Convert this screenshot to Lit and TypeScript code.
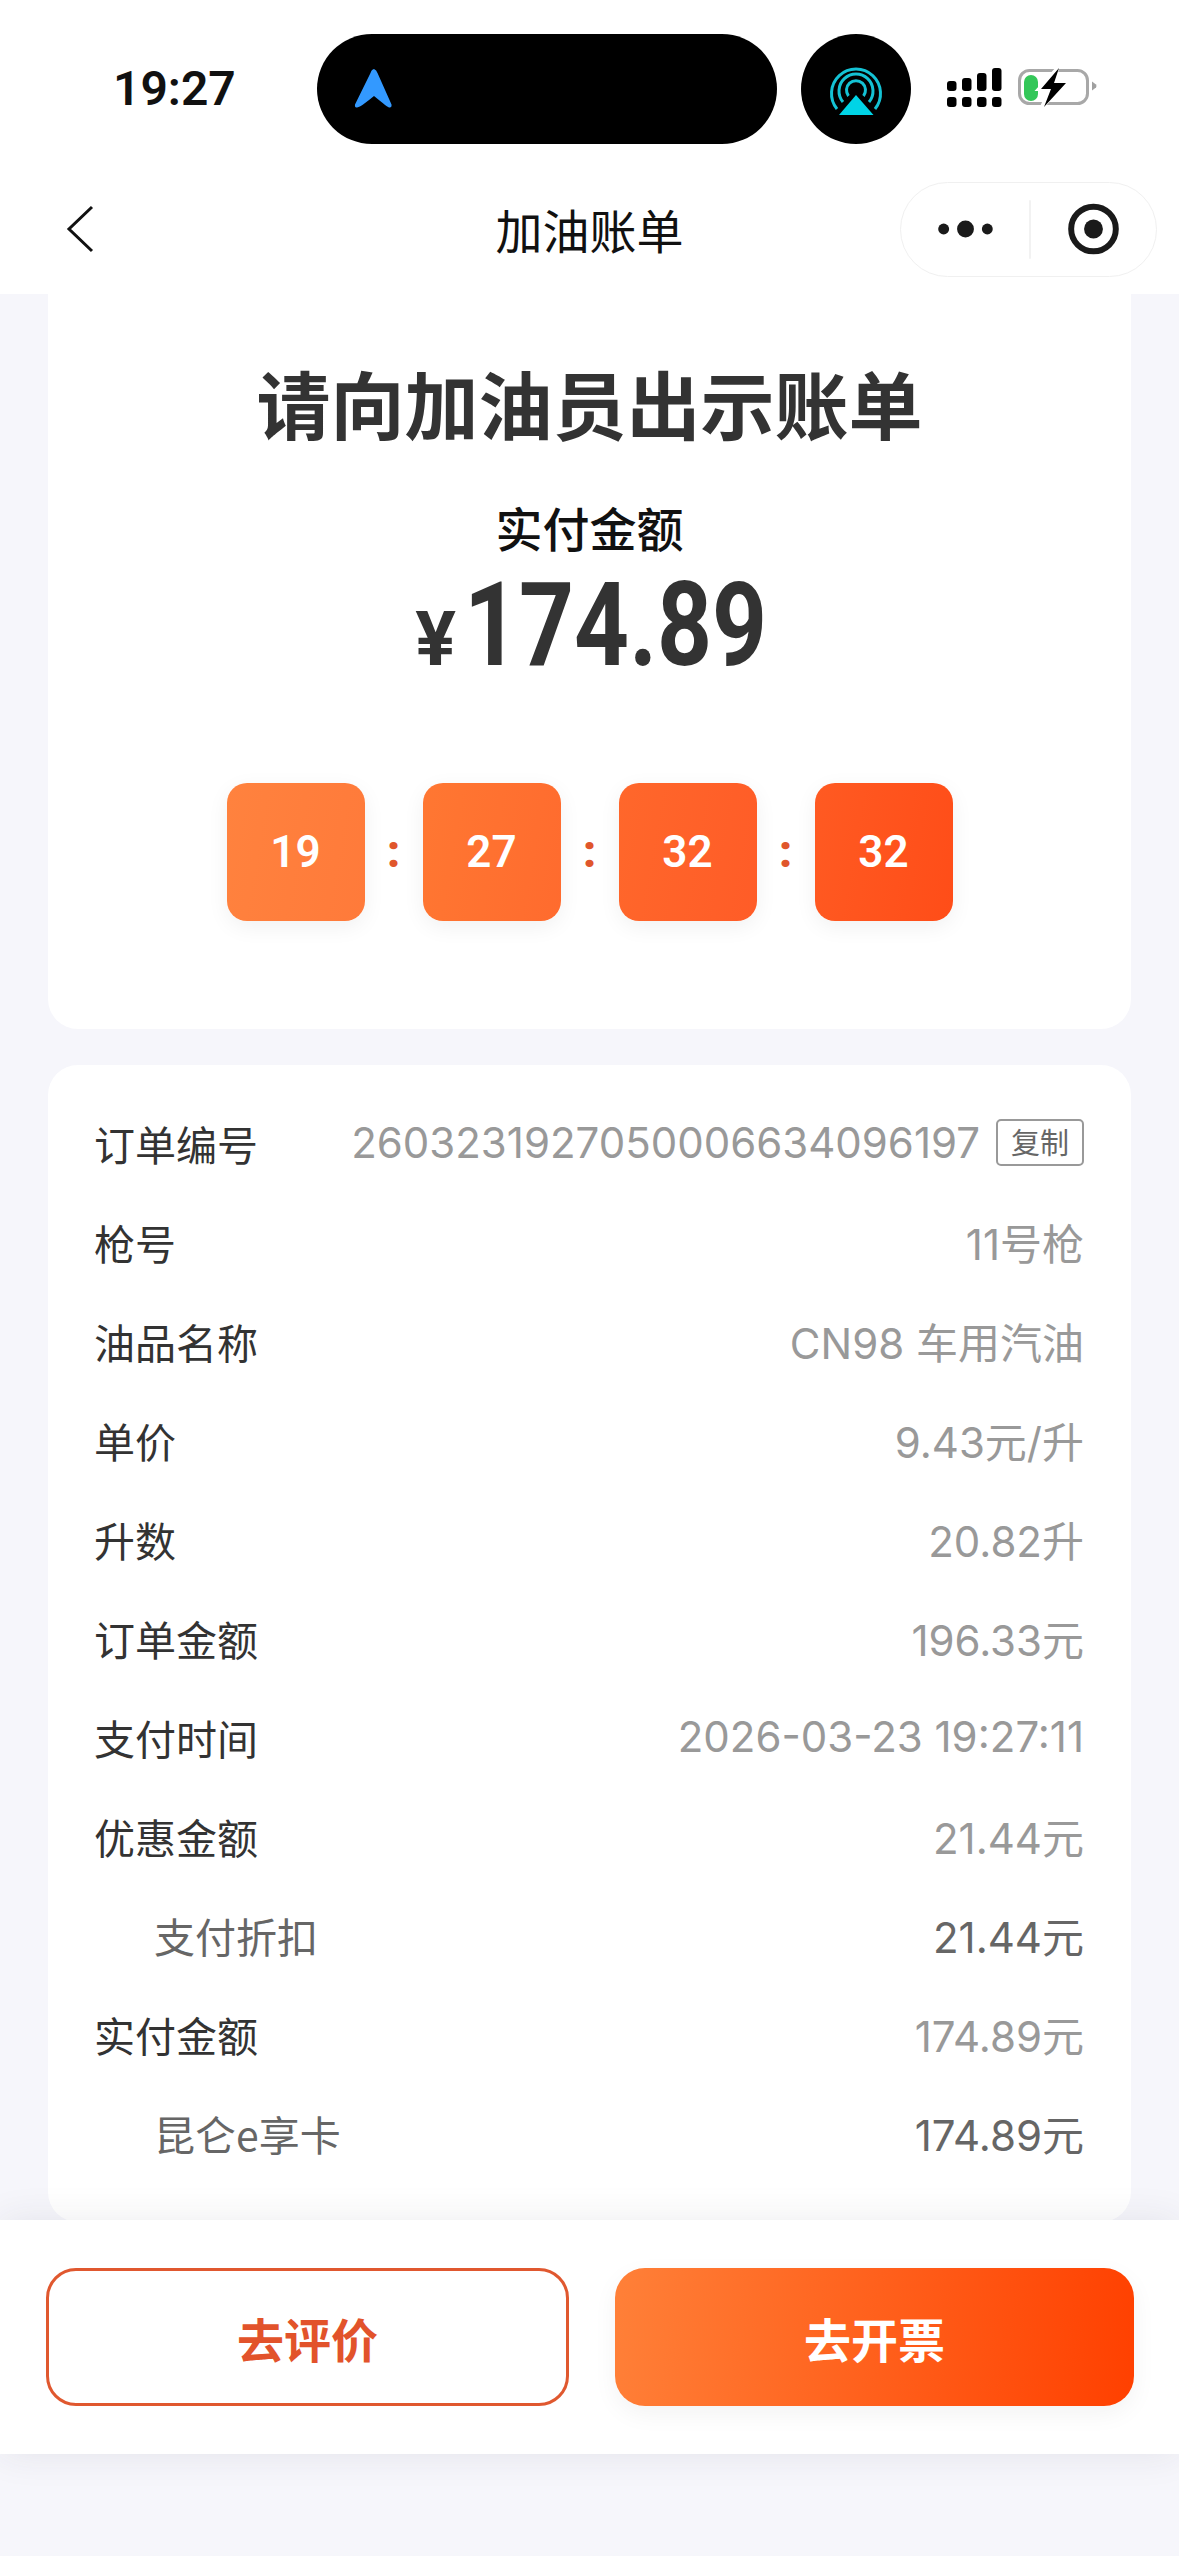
import { LitElement, html, css, svg } from 'lit';
import { customElement } from 'lit/decorators.js';

interface Row {
  label: string;
  value: string;
  sub?: boolean;
  copy?: boolean;
}

const ROWS: Row[] = [
  { label: '订单编号', value: '2603231927050006634096197', copy: true },
  { label: '枪号', value: '11号枪' },
  { label: '油品名称', value: 'CN98 车用汽油' },
  { label: '单价', value: '9.43元/升' },
  { label: '升数', value: '20.82升' },
  { label: '订单金额', value: '196.33元' },
  { label: '支付时间', value: '2026-03-23 19:27:11' },
  { label: '优惠金额', value: '21.44元' },
  { label: '支付折扣', value: '21.44元', sub: true },
  { label: '实付金额', value: '174.89元' },
  { label: '昆仑e享卡', value: '174.89元', sub: true },
];

const TIMER = ['19', '27', '32', '32'];
// one gradient runs across all four boxes
const TIMER_COLORS = [
  ['#ff823e', '#ff7a3a'],
  ['#ff7732', '#ff6b2e'],
  ['#ff672b', '#ff5c27'],
  ['#ff5a22', '#ff4d18'],
];

@customElement('app-root')
export class AppRoot extends LitElement {
  static styles = css`
    :host {
      display: block;
      min-height: 2556px;
      background: #f6f6fb;
      font-family: 'Noto Sans CJK SC', sans-serif;
      color: #333;
    }

    .top {
      background: #fff;
      position: relative;
      z-index: 2;
    }

    .status {
      display: flex;
      align-items: center;
      height: 110px;
      padding: 34px 0 20px 113px;
    }

    .time {
      width: 204px;
      font-family: Roboto, sans-serif;
      font-weight: 600;
      font-size: 48px;
      line-height: 106px;
      color: #111;
    }

    .island {
      width: 460px;
      height: 110px;
      border-radius: 55px;
      background: #000;
    }

    .island svg,
    .bubble svg,
    .signal,
    .battery {
      display: block;
    }

    .bubble {
      width: 110px;
      height: 110px;
      margin-left: 24px;
      border-radius: 50%;
      background: #000;
    }

    .signal {
      margin: 0 0 3px 36px;
    }

    .battery {
      margin: 0 0 2px 16px;
    }

    .nav {
      display: grid;
      grid-template-columns: 1fr auto 1fr;
      align-items: center;
      height: 130px;
    }

    .back {
      display: block;
      margin-left: 66px;
    }

    .nav-title {
      font-size: 47px;
      line-height: 60px;
      color: #111;
    }

    .capsule {
      justify-self: end;
      display: flex;
      align-items: center;
      width: 257px;
      height: 95px;
      margin-right: 22px;
      box-sizing: border-box;
      border: 1.5px solid #f0f0f0;
      border-radius: 48px;
    }

    .capsule svg {
      display: block;
    }

    .main {
      height: 1926px;
      overflow: hidden;
      padding: 0 48px;
    }

    .card {
      background: #fff;
      border-radius: 30px;
    }

    .hero {
      display: flex;
      flex-direction: column;
      align-items: center;
      height: 765px;
      box-sizing: border-box;
      margin-top: -30px;
      padding-top: 82px;
    }

    .hero-title {
      font-size: 74px;
      font-weight: 700;
      line-height: 112px;
      color: #333;
    }

    .paid-label {
      margin-top: 34px;
      font-size: 47px;
      font-weight: 500;
      line-height: 70px;
      color: #111;
    }

    .price {
      display: flex;
      align-items: baseline;
      height: 122px;
      margin-top: 2px;
      color: #333;
      font-family: Roboto, sans-serif;
      font-weight: 700;
      line-height: 122px;
    }

    .price .yen {
      font-size: 76px;
      margin-right: 8px;
    }

    .price .num {
      display: inline-block;
      width: 300px;
      font-size: 117px;
      white-space: nowrap;
      /* no condensed face is installed, so the digits are narrowed here */
      transform: scaleX(0.82);
      transform-origin: left center;
    }

    .timer {
      display: flex;
      align-items: center;
      margin-top: 97px;
    }

    .box {
      width: 138px;
      height: 138px;
      border-radius: 20px;
      display: flex;
      align-items: center;
      justify-content: center;
      color: #fff;
      font-family: Roboto, sans-serif;
      font-weight: 600;
      font-size: 44px;
      box-shadow: 0 6px 22px rgba(0, 0, 0, 0.06);
    }

    .colon {
      width: 58px;
      text-align: center;
      color: #e0562c;
      font-family: Roboto, sans-serif;
      font-weight: 900;
      font-size: 44px;
    }

    .detail {
      margin-top: 36px;
      padding: 28px 47px 40px 46px;
    }

    .row {
      display: flex;
      align-items: center;
      justify-content: space-between;
      height: 99px;
    }

    .label {
      color: #333;
      font-size: 41px;
    }

    .value {
      display: flex;
      align-items: center;
      color: #999;
      font-family: Inter, 'Noto Sans CJK SC', sans-serif;
      font-size: 42px;
    }

    .row.sub .label {
      margin-left: 60px;
      color: #666;
    }

    .row.sub .value {
      color: #666;
    }

    .copy {
      margin-left: 16px;
      width: 88px;
      height: 47px;
      box-sizing: border-box;
      border: 2.5px solid #999;
      border-radius: 5px;
      font-family: 'Noto Sans CJK SC', sans-serif;
      font-size: 29px;
      line-height: 40px;
      text-align: center;
      color: #666;
    }

    .footer {
      position: relative;
      display: grid;
      grid-template-columns: 523px 519px;
      gap: 46px;
      height: 234px;
      box-sizing: border-box;
      padding: 48px 0 0 46px;
      background: #fff;
      box-shadow: 0 0 36px rgba(40, 40, 70, 0.09);
    }

    .btn {
      height: 138px;
      box-sizing: border-box;
      border-radius: 30px;
      display: flex;
      align-items: center;
      justify-content: center;
      font-size: 47px;
      font-weight: 700;
    }

    .btn.ghost {
      border: 3px solid #e0582f;
      color: #e2532b;
      background: #fff;
    }

    .btn.solid {
      color: #fff;
      background: linear-gradient(96deg, #ff8038, #ff4000);
      box-shadow: 0 8px 24px rgba(0, 0, 0, 0.05);
    }
  `;

  private renderSignal() {
    const xs = [0, 15, 30, 45];
    const tops = [13, 10, 5, 0];
    return html`<svg class="signal" width="55" height="39" viewBox="0 0 55 39">
      ${xs.map(
        (x, i) => svg`
          <rect x=${x} y=${tops[i]} width="9.5" height=${23 - tops[i]} rx="3" fill="#000"></rect>
          <rect x=${x} y="29" width="9.5" height="10" rx="3" fill="#000"></rect>`
      )}
    </svg>`;
  }

  private renderBattery() {
    return html`<svg class="battery" width="80" height="40" viewBox="0 0 80 40">
      <rect x="1.5" y="2.5" width="68" height="33" rx="10" fill="none" stroke="#a8a8a8" stroke-width="3"></rect>
      <path d="M74 13.5 L78 16.5 Q79 18 78 19.5 L74 22.5 Z" fill="#a0a0a0"></path>
      <rect x="6" y="7" width="14" height="26" rx="7" fill="#34c759"></rect>
      <path d="M39 1 L21 21 L32 21 L24 39 L47 15 L35 15 Z" fill="#fff" stroke="#fff" stroke-width="4"></path>
      <path d="M41 0 L23 21 L33 21 L26 39 L48 15 L36 15 Z" fill="#000"></path>
    </svg>`;
  }

  render() {
    return html`
      <div class="top">
        <div class="status">
          <div class="time">19:27</div>
          <div class="island">
            <svg width="110" height="110" viewBox="0 0 110 110">
              <path
                d="M57 35 Q59.500 36 60.500 39 L74.500 70.500 Q75 74 72 73.500 Q71 73.500 57 62 Q43 73.500 40 73.500 Q37.500 74 38 70.500 L53.500 39 Q54.500 35.500 57 35 Z"
                fill="#3399ff"
              ></path>
            </svg>
          </div>
          <div class="bubble">
            <svg width="110" height="110" viewBox="0 0 110 110">
              <g fill="none" stroke="#14c2d4" stroke-width="3">
                <path d="M36 75 A24.500 24.500 0 1 1 74 75"></path>
                <path d="M42 68 A17 17 0 1 1 68 68"></path>
                <path d="M47.500 62 A9.500 9.500 0 1 1 62.500 62"></path>
              </g>
              <path d="M55 61 L72.500 81 L38 81 Z" fill="#00d4e6"></path>
            </svg>
          </div>
          ${this.renderSignal()} ${this.renderBattery()}
        </div>
        <div class="nav">
          <svg class="back" width="30" height="50" viewBox="0 0 30 50">
            <path d="M26 3 L3 25 L26 47" fill="none" stroke="#111" stroke-width="3"></path>
          </svg>
          <div class="nav-title">加油账单</div>
          <div class="capsule">
            <svg width="257" height="95" viewBox="0 0 257 95">
              <circle cx="43" cy="47" r="5.500" fill="#1a1a1a"></circle>
              <circle cx="65" cy="47" r="8.500" fill="#1a1a1a"></circle>
              <circle cx="87" cy="47" r="5.500" fill="#1a1a1a"></circle>
              <line x1="130" y1="18" x2="130" y2="77" stroke="#eee" stroke-width="1.500"></line>
              <circle cx="194" cy="47" r="22.500" fill="none" stroke="#1a1a1a" stroke-width="6"></circle>
              <circle cx="194" cy="47" r="9.500" fill="#1a1a1a"></circle>
            </svg>
          </div>
        </div>
      </div>

      <div class="main">
        <div class="card hero">
          <div class="hero-title">请向加油员出示账单</div>
          <div class="paid-label">实付金额</div>
          <div class="price"><span class="yen">¥</span><span class="num">174.89</span></div>
          <div class="timer">
            ${TIMER.map(
              (t, i) => html`
                ${i > 0 ? html`<div class="colon">:</div>` : null}
                <div
                  class="box"
                  style="background:linear-gradient(100deg,${TIMER_COLORS[i][0]},${TIMER_COLORS[i][1]})"
                >
                  ${t}
                </div>
              `
            )}
          </div>
        </div>

        <div class="card detail">
          ${ROWS.map(
            (r) => html`
              <div class="row ${r.sub ? 'sub' : ''}">
                <span class="label">${r.label}</span>
                <span class="value">
                  ${r.value}${r.copy ? html`<span class="copy">复制</span>` : null}
                </span>
              </div>
            `
          )}
        </div>
      </div>

      <div class="footer">
        <div class="btn ghost">去评价</div>
        <div class="btn solid">去开票</div>
      </div>
    `;
  }
}

declare global {
  interface HTMLElementTagNameMap {
    'app-root': AppRoot;
  }
}
